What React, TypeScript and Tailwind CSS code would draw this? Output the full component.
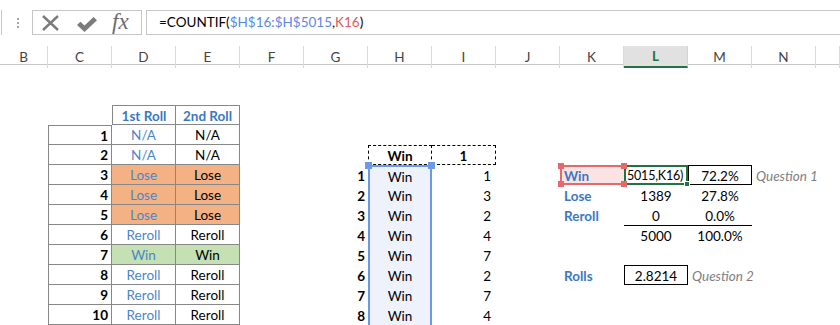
import type { ReactNode } from "react";

type Cell = { t?: ReactNode; c?: string };

const cols = ["B", "C", "D", "E", "F", "G", "H", "I", "J", "K", "L", "M", "N", ""];

const cells: Record<string, Cell> = {};
const set = (r: number, c: number, t: ReactNode, cls: string) => {
  cells[`${r}-${c}`] = { t, c: cls };
};

// left table: rolls
const rolls: [string, string, string][] = [
  ["N/A", "N/A", ""],
  ["N/A", "N/A", ""],
  ["Lose", "Lose", "bg-[#f4b183]"],
  ["Lose", "Lose", "bg-[#f4b183]"],
  ["Lose", "Lose", "bg-[#f4b183]"],
  ["Reroll", "Reroll", ""],
  ["Win", "Win", "bg-[#c5e0b3]"],
  ["Reroll", "Reroll", ""],
  ["Reroll", "Reroll", ""],
  ["Reroll", "Reroll", ""],
];

set(2, 2, "1st Roll", "border border-[#878787] font-bold text-[#3b78c2] justify-center");
set(2, 3, "2nd Roll", "border-t border-r border-b border-[#878787] font-bold text-[#3b78c2] justify-center");
rolls.forEach(([a, b, fill], i) => {
  const r = 3 + i;
  set(r, 1, i + 1, (i === 0 ? "border-t " : "") + "border-l border-r border-b border-[#878787] font-bold justify-end pr-[3px]");
  set(r, 2, a, `border-r border-b border-[#878787] justify-center text-[#4a86c8] ${fill}`);
  set(r, 3, b, `border-r border-b border-[#878787] justify-center ${fill}`);
});

// middle: simulated results
const nums = [1, 3, 2, 4, 7, 2, 7, 4];
set(4, 6, "Win", "border border-dashed border-black font-bold justify-center");
set(4, 7, "1", "border-t border-r border-b border-dashed border-black font-bold justify-center");
nums.forEach((n, i) => {
  const r = 5 + i;
  set(r, 5, i + 1, "font-bold justify-end pr-[3px]");
  set(
    r,
    6,
    i === 0 ? (
      <>
        Win
        <span className="absolute -left-[5px] -top-[5px] size-[7px] bg-[#6e98e8] z-10" />
        <span className="absolute -right-[5px] -top-[5px] size-[7px] bg-[#6e98e8] z-10" />
      </>
    ) : (
      "Win"
    ),
    (i === 0 ? "border-t-2 " : "") + "bg-[#edf2fc] border-l-2 border-r-2 border-[#6e98e8] justify-center"
  );
  set(r, 7, n, "justify-end pr-[5px]");
});

// right: summary
const label = "font-bold text-[#3b78c2] pl-[4px]";
set(
  5,
  9,
  <>
    Win
    <span className="absolute -left-[4px] -top-[4px] size-[6px] bg-[#e5696b] z-10" />
    <span className="absolute -right-[3px] -top-[4px] size-[6px] bg-[#e5696b] z-10" />
    <span className="absolute -left-[4px] -bottom-[4px] size-[6px] bg-[#e5696b] z-10" />
    <span className="absolute -right-[3px] -bottom-[4px] size-[6px] bg-[#e5696b] z-10" />
  </>,
  "bg-[#fbe3e3] border-2 border-r-0 border-[#e5696b] font-bold text-[#3b78c2] pl-[2px]"
);
set(
  5,
  10,
  <>
    <span className="text-[12.5px] tracking-[-0.2px]">5015,K16)</span>
    <span className="absolute -right-[4px] -bottom-[4px] size-[6px] bg-[#217346] border border-white z-10" />
  </>,
  "border-2 border-[#217346] pl-[1px]"
);
set(5, 11, "72.2%", "border border-black justify-center");
set(5, 12, "Question 1", "italic text-[#7f7f7f] pl-[4px]");
set(6, 9, "Lose", label);
set(6, 10, "1389", "justify-center");
set(6, 11, "27.8%", "justify-center");
set(7, 9, "Reroll", label);
set(7, 10, "0", "justify-center");
set(7, 11, "0.0%", "justify-center");
set(8, 10, "5000", "border-t border-black justify-center");
set(8, 11, "100.0%", "border-t border-black justify-center");
set(10, 9, "Rolls", label);
set(10, 10, "2.8214", "border border-black justify-center");
set(10, 11, "Question 2", "italic text-[#7f7f7f] pl-[4px]");

function FormulaBar() {
  return (
    <div className="h-[46px] flex items-start pt-[10px] bg-white">
      <div className="w-[2px] h-[25px] border-r border-[#c6c6c6]" />
      <div className="w-[30px] h-[25px] flex flex-col items-center justify-center gap-[2px] pl-[1px]">
        <span className="size-[2px] bg-[#a6a6a6]" />
        <span className="size-[2px] bg-[#a6a6a6]" />
        <span className="size-[2px] bg-[#a6a6a6]" />
      </div>
      <div className="w-[110px] h-[25px] border border-[#c6c6c6] flex items-center">
        <svg width="17" height="16" viewBox="0 0 17 16" className="ml-[9px]">
          <path d="M1 1 L16 15 M16 1 L1 15" stroke="#7b7b7b" strokeWidth="2.4" fill="none" />
        </svg>
        <svg width="20" height="15" viewBox="0 0 20 15" className="ml-[18px] mt-[3px]">
          <path d="M0 8 L3.4 4.8 L7.5 8.6 L16.6 0 L20 3.2 L7.5 15 Z" fill="#7b7b7b" />
        </svg>
        <span className="ml-[15px] text-[23px] leading-none italic text-[#6b6b6b] font-['Liberation_Serif',serif] -mt-[2px]">
          fx
        </span>
      </div>
      <div className="ml-[4px] flex-1 h-[25px] border border-r-0 border-[#c6c6c6] flex items-center pl-[12px] text-[13.5px]">
        <span>=COUNTIF(</span>
        <span className="text-[#5b87e8]">$H$16:$H$5015</span>
        <span>,</span>
        <span className="text-[#e0585b]">K16</span>
        <span>)</span>
      </div>
    </div>
  );
}

export default function App() {
  return (
    <div className="w-[840px] h-[325px] overflow-hidden bg-white text-black text-[13.5px] font-['Lato',sans-serif]">
      <FormulaBar />
      <div className="grid grid-cols-[48px_repeat(12,64px)_1fr] h-[19px] border-b border-[#c8c8c8]">
        {cols.map((c) =>
          c === "L" ? (
            <div key={c} className="flex items-center justify-center bg-[#e1e1e1] border-r border-[#d4d4d4] border-b-2 border-b-[#217346] font-bold text-[#217346]">
              {c}
            </div>
          ) : (
            <div key={c || "x"} className="flex items-center justify-center border-r border-[#d9d9d9] text-[#444]">
              {c}
            </div>
          )
        )}
      </div>
      <div className="grid grid-cols-[48px_repeat(12,64px)_1fr] auto-rows-[20px]">
        {Array.from({ length: 13 }).map((_, r) =>
          cols.map((_, c) => {
            const cell = cells[`${r}-${c}`];
            return (
              <div
                key={`${r}-${c}`}
                className={`relative flex items-center whitespace-nowrap pt-[2px] ${cell?.c ?? ""}`}
              >
                {cell?.t}
              </div>
            );
          })
        )}
      </div>
    </div>
  );
}
